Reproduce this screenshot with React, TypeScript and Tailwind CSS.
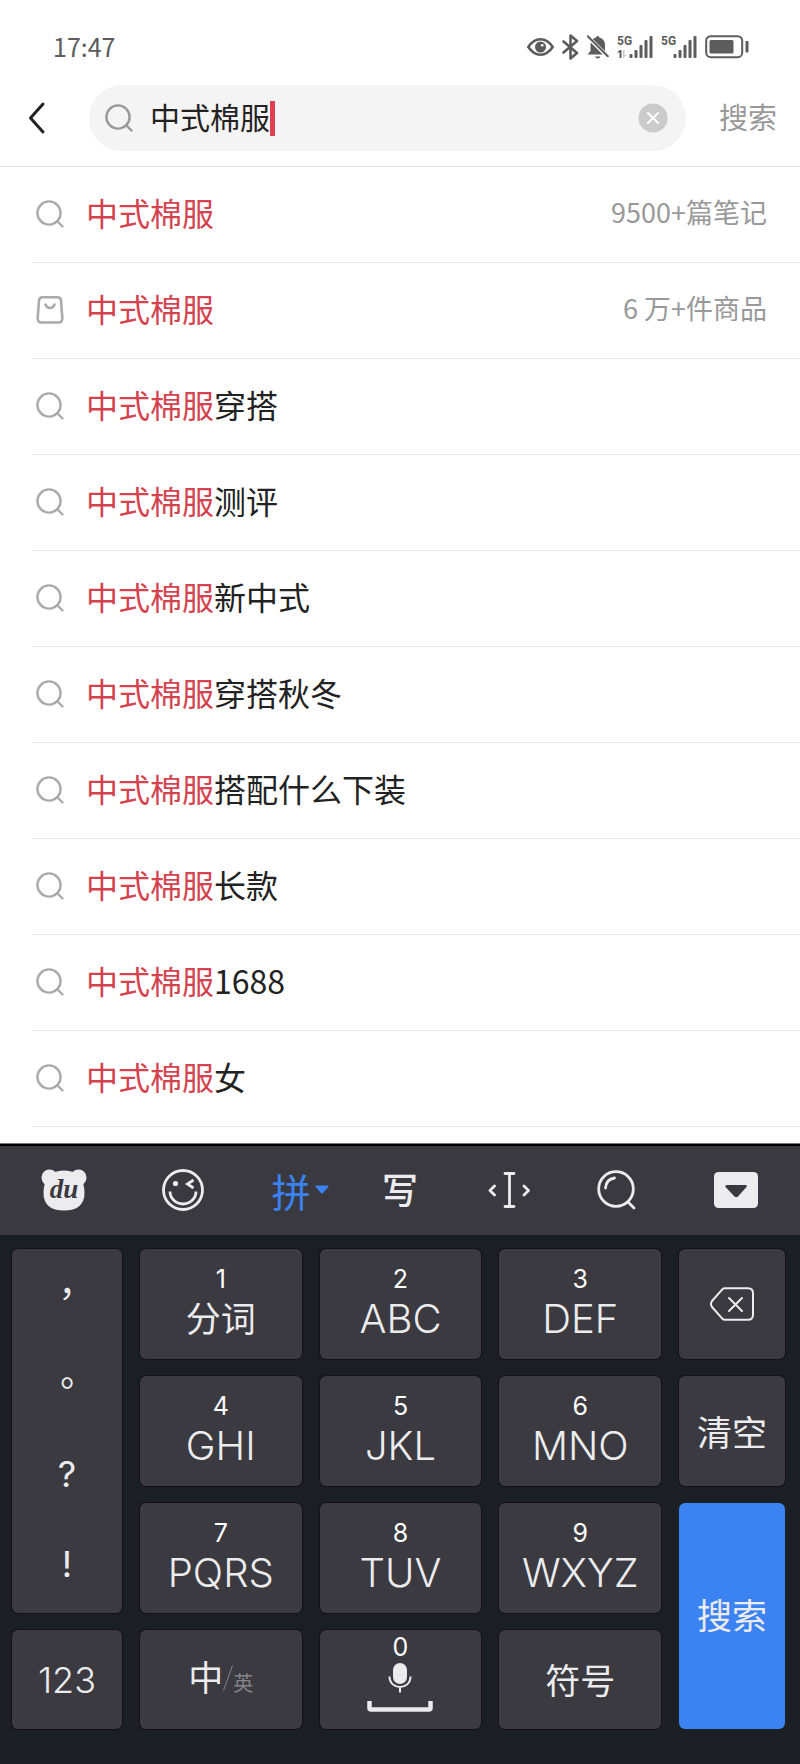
import { useState } from "react";
import type { ReactNode } from "react";

type Suggestion = {
  id: string;
  rest: string;
  count?: string;
  kind?: "goods";
};

const KEYWORD = "中式棉服";

const SUGGESTIONS: Suggestion[] = [
  { id: "notes", rest: "", count: "9500+篇笔记" },
  { id: "goods", rest: "", count: "6 万+件商品", kind: "goods" },
  ...["穿搭", "测评", "新中式", "穿搭秋冬", "搭配什么下装", "长款", "1688", "女"].map(
    (rest) => ({ id: rest, rest })
  ),
];

const PUNCTUATION = ["，", "。", "?", "!"];

const KEY =
  "flex flex-col items-center justify-center rounded-md bg-[#3a3a40] text-[#ececee] shadow-[0_0_0_1px_#111318]";

function SearchIcon({ className }: { className: string }) {
  return (
    <svg viewBox="0 0 28 28" className={className} fill="none" stroke="currentColor" strokeWidth="2.4" strokeLinecap="round" aria-hidden>
      <circle cx="13" cy="13" r="11.600" />
      <path d="M21.500 21.500l5 5" />
    </svg>
  );
}

function BagIcon() {
  return (
    <svg viewBox="0 0 28 28" className="size-7" fill="none" stroke="currentColor" strokeWidth="2.600" strokeLinecap="round" strokeLinejoin="round" aria-hidden>
      <path d="M6.500 1.300h15q3.200 0 3.500 3.200l1.300 17.500q.2 4.500-3.800 4.500H5.500q-4 0-3.800-4.500L3 4.500Q3.300 1.300 6.500 1.300z" />
      <path d="M9.500 8.500q1.300 3.500 4.500 3.500t4.500-3.500" />
    </svg>
  );
}

function Signal({ data }: { data?: boolean }) {
  return (
    <svg viewBox="0 0 36 24" className="h-6 w-9" fill="currentColor" aria-hidden>
      <text x="0" y="10" className="font-['Liberation_Sans_Narrow','Roboto'] text-[12px] font-bold">
        5G
      </text>
      {data && (
        <>
          <path d="M0 17.500l3-2.500h1.500v8H2.500v-5.500H0z" />
          <path d="M6 15h1.500v5h2L6 23z" opacity=".35" />
        </>
      )}
      <rect x="12.500" y="19" width="3" height="4" rx="1" />
      <rect x="17.500" y="15" width="3" height="8" rx="1" />
      <rect x="22.500" y="10" width="3" height="13" rx="1" />
      <rect x="27.500" y="5" width="3" height="18" rx="1" />
      <rect x="32.500" y="1" width="3" height="22" rx="1" />
    </svg>
  );
}

function StatusBar() {
  return (
    <div className="flex h-[85px] items-center justify-between pt-2 pr-[51px] pl-[53px] text-[#5c5c5c]">
      <span className="pb-0.5 text-[25px] leading-8">17:47</span>
      <div className="flex items-center gap-2">
        <svg viewBox="0 0 27 18" className="h-[18px] w-[27px]" fill="none" aria-hidden>
          <path d="M1.300 9Q6.500 1.300 13.500 1.300T25.700 9Q20.500 16.700 13.500 16.700T1.300 9z" stroke="currentColor" strokeWidth="2.600" />
          <circle cx="13.500" cy="9" r="5.500" fill="currentColor" />
          <circle cx="15.200" cy="7.200" r="1.300" fill="#fff" />
        </svg>
        <svg viewBox="0 0 17 26" className="h-[26px] w-[17px]" fill="none" stroke="currentColor" strokeWidth="2.600" strokeLinejoin="round" strokeLinecap="round" aria-hidden>
          <path d="M1.500 7.500l13.500 11.500-6.500 5.500v-23l6.500 5.500L1.500 18.500" />
        </svg>
        <svg viewBox="0 0 22 24" className="h-6 w-[22px]" aria-hidden>
          <path d="M9 2.500q0-1.500 1.700-1.500t1.700 1.500q5.600 1.500 5.600 8V16l2.500 3.500H.500L3.500 16v-5.500Q3.500 4 9 2.500z" fill="currentColor" />
          <path d="M8 21.500h5.500q-.5 2-2.700 2T8 21.500z" fill="currentColor" />
          <path d="M-.500.500l20 20" stroke="#fff" strokeWidth="4" />
          <path d="M.800 1.200l20 20" stroke="currentColor" strokeWidth="2" strokeLinecap="round" />
        </svg>
        <Signal data />
        <Signal />
        <svg viewBox="0 0 44 24" className="h-6 w-11" aria-hidden>
          <rect x="1.200" y="1.200" width="36" height="21" rx="4.500" fill="none" stroke="currentColor" strokeWidth="2" />
          <rect x="4.500" y="5" width="24" height="13.500" rx="1.500" fill="currentColor" />
          <rect x="40.500" y="6" width="3" height="11.500" rx=".8" fill="currentColor" />
        </svg>
      </div>
    </div>
  );
}

function SearchHeader() {
  const [query, setQuery] = useState(KEYWORD);

  return (
    <header className="border-b border-[#e6e6e6]">
      <StatusBar />
      <form className="flex items-center pb-[15px]" onSubmit={(e) => e.preventDefault()}>
        <button type="button" aria-label="返回" className="flex w-[89px] shrink-0 pl-7">
          <svg viewBox="0 0 18 34" className="h-[34px] w-[18px]" fill="none" stroke="#222" strokeWidth="3" strokeLinecap="round" strokeLinejoin="round" aria-hidden>
            <path d="M15 3L2.500 17 15 31" />
          </svg>
        </button>
        <label className="flex h-[66px] min-w-0 flex-1 cursor-text items-center rounded-full bg-[#f4f4f4] pr-[18px] pl-4">
          <SearchIcon className="size-7 shrink-0 text-[#999]" />
          <input
            type="text"
            aria-label="搜索内容"
            value={query}
            onChange={(e) => setQuery(e.target.value)}
            className="ml-[17px] field-sizing-content max-w-full min-w-0 pb-1 text-[30px] leading-9 text-[#222] outline-none"
          />
          <span className="h-[35px] w-[5px] shrink-0 bg-[#dd4152]" />
          <button type="button" aria-label="清除" onClick={() => setQuery("")} className="ml-auto shrink-0">
            <svg viewBox="0 0 30 30" className="size-[30px]" aria-hidden>
              <circle cx="15" cy="15" r="14.500" fill="#cbcbcb" />
              <path d="M10 10l10 10M20 10L10 20" stroke="#fff" strokeWidth="2" strokeLinecap="round" />
            </svg>
          </button>
        </label>
        <button type="submit" className="w-[114px] shrink-0 pb-1 pl-2.5 text-[29px] leading-9 text-[#999]">
          搜索
        </button>
      </form>
    </header>
  );
}

function SuggestionRow({ item }: { item: Suggestion }) {
  return (
    <li className="ml-8 border-b border-[#ebebeb]">
      <a href="#" className="flex h-[95px] items-center pr-[33px] pb-0.5 pl-1">
        <span className="shrink-0 text-[#aaa]">
          {item.kind === "goods" ? <BagIcon /> : <SearchIcon className="size-7" />}
        </span>
        <span className="ml-[22px] pb-1 text-[32px] leading-10 text-[#222]">
          <span className="text-[#d4434f]">{KEYWORD}</span>
          {item.rest}
        </span>
        {item.count && (
          <span className="ml-auto pb-1 text-[27px] leading-10 text-[#999]">{item.count}</span>
        )}
      </a>
    </li>
  );
}

function Tool({ label, children }: { label: string; children: ReactNode }) {
  return (
    <button type="button" aria-label={label} className="flex items-center justify-center">
      {children}
    </button>
  );
}

function Toolbar() {
  return (
    <div className="grid h-[91px] grid-cols-[76fr_82fr_72fr_48fr_90fr_46fr_112fr] gap-10 border-t-2 border-black bg-[#3a3940] pr-2 pb-0.5 pl-[26px] text-[#ececee]">
      <Tool label="百度输入法">
        <svg viewBox="0 0 46 42" className="h-[42px] w-[46px]" aria-hidden>
          <circle cx="8.500" cy="8.500" r="8" fill="currentColor" />
          <circle cx="37.500" cy="8.500" r="8" fill="currentColor" />
          <path d="M23 1.500c5 0 8 1 11 2.500 6 4 9.500 10 9.500 20C43.500 36 36 41.500 23 41.500S2.500 36 2.500 24C2.500 14 6 8 12 4c3-1.500 6-2.500 11-2.500z" fill="currentColor" />
          <text x="23" y="29" textAnchor="middle" fill="#3a3940" className="font-['Liberation_Serif',serif] text-[27px] font-bold italic">
            du
          </text>
        </svg>
      </Tool>
      <Tool label="表情">
        <svg viewBox="0 0 42 42" className="size-[42px]" fill="none" stroke="currentColor" strokeWidth="2.800" aria-hidden>
          <circle cx="21" cy="21" r="19.500" />
          <path d="M8 22.500a13 12.500 0 0 0 26 0" />
          <circle cx="13.500" cy="14.500" r="2.600" fill="currentColor" stroke="none" />
          <path d="M31.500 11l-6 4 6 4" />
        </svg>
      </Tool>
      <button type="button" className="flex items-center justify-center gap-1 text-[39px] leading-10 text-[#3b82f2]">
        拼
        <svg viewBox="0 0 14 9" className="h-[9px] w-[14px] shrink-0" fill="currentColor" aria-hidden>
          <path d="M1 .5h12q1.200.5.300 1.500L8 8Q7 9 6 8L.700 2Q-.200 1 1 .500z" />
        </svg>
      </button>
      <button type="button" className="pb-1 text-[36px] leading-10 font-medium">
        写
      </button>
      <Tool label="光标">
        <svg viewBox="0 0 42 36" className="h-9 w-[42px]" fill="none" stroke="currentColor" strokeWidth="2.800" strokeLinecap="round" strokeLinejoin="round" aria-hidden>
          <path d="M6.500 14L2 18.500 6.500 23M36 14l4.500 4.500L36 23" />
          <path d="M17 1.500h9M17 34.500h9M21.500 1.500v33" />
        </svg>
      </Tool>
      <Tool label="搜索">
        <svg viewBox="0 0 40 40" className="size-10" fill="none" stroke="currentColor" strokeWidth="2.800" strokeLinecap="round" aria-hidden>
          <circle cx="19" cy="19" r="17.300" />
          <path d="M31 32l6 6M8.500 18Q9 9.500 17.500 8" />
        </svg>
      </Tool>
      <Tool label="收起键盘">
        <svg viewBox="0 0 44 36" className="h-9 w-11 shrink-0" aria-hidden>
          <rect width="44" height="36" rx="4.500" fill="currentColor" />
          <path d="M12.500 13h19.500q1.500.500.500 2l-8.500 9.500q-1.800 1.500-3.500 0L11.500 15q-.8-1.500 1-2z" fill="#3a3940" />
        </svg>
      </Tool>
    </div>
  );
}

function LetterKey({ digit, letters }: { digit: string; letters: string }) {
  return (
    <button type="button" className={`${KEY} pb-0.5 font-['Inter','Noto_Sans_CJK_SC',sans-serif]`}>
      <span className="text-[25px] leading-8 text-white">{digit}</span>
      <span className={letters === "分词" ? "text-[35px] leading-[48px]" : "text-[40px] leading-[48px] font-light"}>
        {letters}
      </span>
    </button>
  );
}

function Keyboard() {
  return (
    <section aria-label="键盘" className="border-t border-[#77777b] bg-[#1b1e25]">
      <Toolbar />
      <div className="grid grid-cols-[110fr_162fr_162fr_162fr_106fr] grid-rows-[110px_110px_110px_99px] gap-x-[18px] gap-y-[17px] pt-3.5 pr-[15px] pb-[35px] pl-3">
        <div className={`${KEY} row-span-3 pb-1`}>
          {PUNCTUATION.map((mark) => (
            <button key={mark} type="button" className="w-full flex-1 font-['Inter','Noto_Sans_CJK_TC',sans-serif] text-[36px] leading-10">
              {mark}
            </button>
          ))}
        </div>
        <LetterKey digit="1" letters="分词" />
        <LetterKey digit="2" letters="ABC" />
        <LetterKey digit="3" letters="DEF" />
        <button type="button" aria-label="删除" className={KEY}>
          <svg viewBox="0 0 44 34" className="h-[34px] w-11" fill="none" stroke="currentColor" strokeWidth="2" strokeLinejoin="round" strokeLinecap="round" aria-hidden>
            <path d="M14.500 1.200h23.500q5 0 5 5v21.600q0 5-5 5H14.500q-1 0-2-1L2 20q-2-3 0-6L12.500 2.200q1-1 2-1z" />
            <path d="M19 11l13 13M32 11L19 24" />
          </svg>
        </button>
        <LetterKey digit="4" letters="GHI" />
        <LetterKey digit="5" letters="JKL" />
        <LetterKey digit="6" letters="MNO" />
        <button type="button" className={`${KEY} text-[35px]`}>
          清空
        </button>
        <LetterKey digit="7" letters="PQRS" />
        <LetterKey digit="8" letters="TUV" />
        <LetterKey digit="9" letters="WXYZ" />
        <button type="button" className="row-span-2 rounded-md bg-[#3b82f2] pb-1 text-[35px] text-[#ececee]">
          搜索
        </button>
        <button type="button" className={`${KEY} font-['Inter',sans-serif] text-[36px] font-light`}>
          123
        </button>
        <button type="button" className={KEY}>
          <span className="flex items-baseline">
            <span className="text-[35px] leading-10">中</span>
            <svg viewBox="0 0 10 26" className="h-[26px] w-[10px]" stroke="#85858a" aria-hidden>
              <path d="M9.500.500L.500 25.500" />
            </svg>
            <span className="text-[20px] leading-10 text-[#85858a]">英</span>
          </span>
        </button>
        <button type="button" aria-label="0 空格 语音" className={`${KEY} pb-4`}>
          <span className="font-['Inter',sans-serif] text-[25px] leading-8 text-white">0</span>
          <svg viewBox="0 0 66 50" className="h-[50px] w-[66px]" fill="none" stroke="currentColor" aria-hidden>
            <rect x="26" y="0" width="14" height="21" rx="7" fill="currentColor" stroke="none" />
            <path d="M22.500 13.500c0 14 21 14 21 0M33 24v5.500" strokeWidth="2" />
            <path d="M2.500 38v7q0 1.500 1.500 1.500h58q1.500 0 1.500-1.500v-7" strokeWidth="4.500" />
          </svg>
        </button>
        <button type="button" className={`${KEY} text-[35px]`}>
          符号
        </button>
      </div>
    </section>
  );
}

function App() {
  return (
    <div lang="zh-CN" className="bg-white font-['Noto_Sans_CJK_SC',sans-serif]">
      <SearchHeader />
      <main className="pb-4">
        <ul>
          {SUGGESTIONS.map((item) => (
            <SuggestionRow key={item.id} item={item} />
          ))}
        </ul>
      </main>
      <Keyboard />
    </div>
  );
}

export default App;
